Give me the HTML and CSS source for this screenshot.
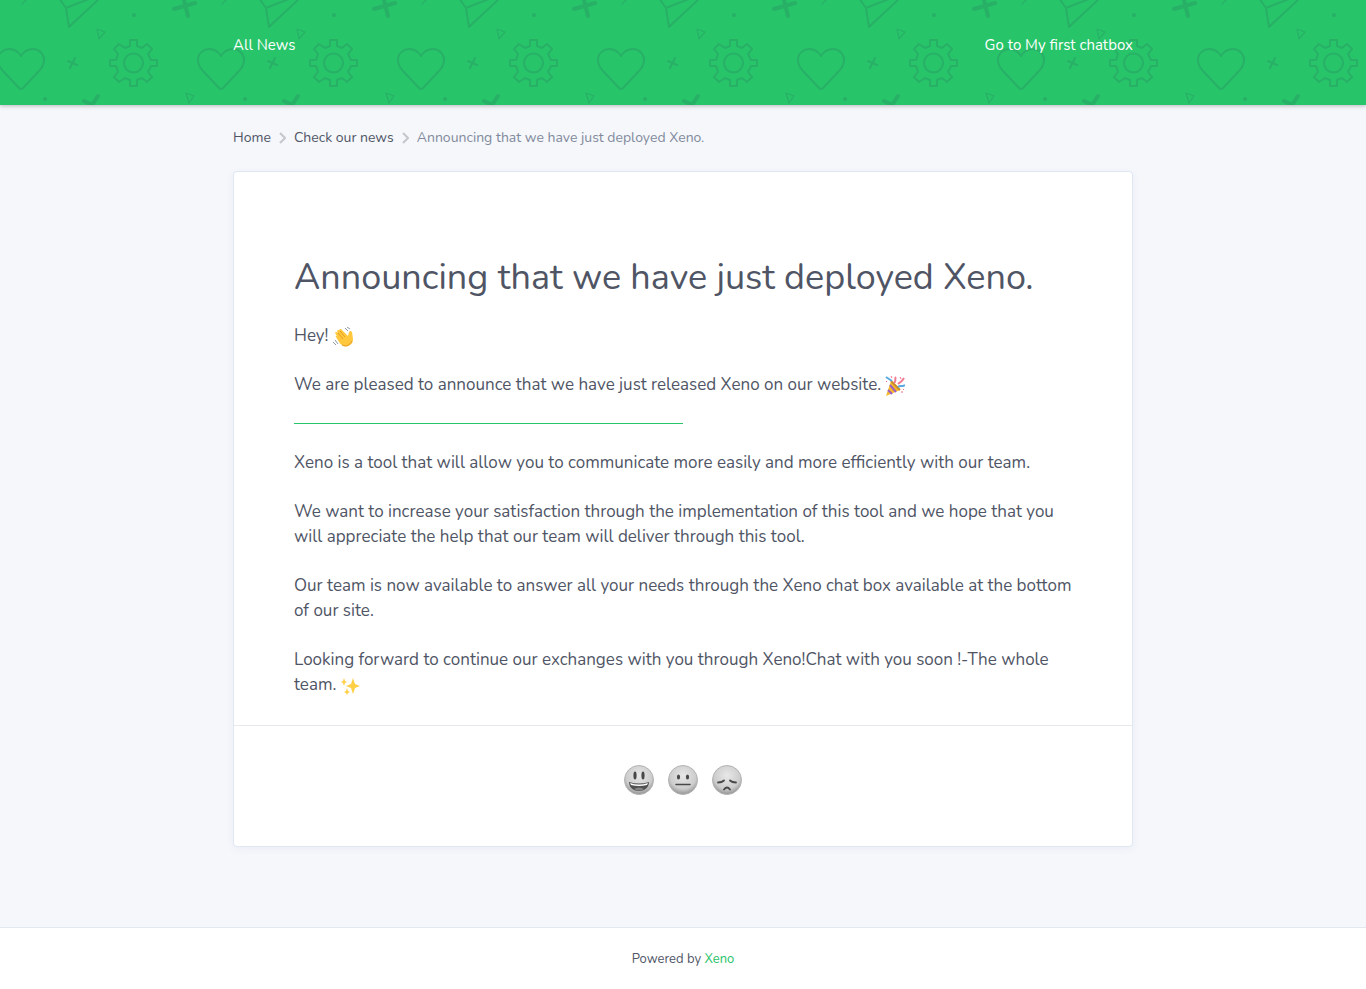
FILE: index.html
```html
<!DOCTYPE html>
<html lang="en">
<head>
    <meta charset="UTF-8">
    <meta name="viewport" content="width=device-width, initial-scale=1.0">
    <title>Announcing that we have just deployed Xeno.</title>
    <link rel="stylesheet" href="styles.css">
</head>
<body>
    <header class="header">
        <svg class="header-pattern" aria-hidden="true">
            <defs>
                <pattern id="doodles" x="-3" y="0" width="200" height="105" viewBox="-3 0 200 105" patternUnits="userSpaceOnUse">
                    <g fill="none" stroke="#27a866" stroke-width="2" stroke-linejoin="round" stroke-linecap="round">
                        <path d="M19 88L3 71C-1 67-2 64-2 60C-2 53 4 49 9 49C14 49 18 51 21 56C24 51 28 49 33 49C39 49 44 54 44 60C44 64 43 67 39 71L23 88Q21 90 19 88Z"/>
                        <path d="M130 40h7v6l5 2 5-4 5 5-4 5 3 6h6v6h-6l-3 6 4 5-5 5-5-4-5 2v6h-7v-6l-5-2-6 4-5-5 4-5-2-6h-6v-6h6l2-6-4-5 5-5 6 4 5-2z"/>
                        <circle cx="133.500" cy="63" r="9.500"/>
                        <path d="M59 -2L66 8L69 27L99 -1M66 8L89 -1"/>
                        <path d="M97 29l8 3-6 7zM186 93l8 3-5 7zM22 4l4-4" stroke-width="1.200"/>
                        <path d="M68 61l9 4M75 58l-5 10"/>
                        <path d="M174 9l21-6M183 -4l5 20M84 101l8 4 6-9" stroke-width="4"/>
                    </g>
                    <g fill="#27a866">
                        <circle cx="134" cy="15" r="2"/>
                        <circle cx="45" cy="99" r="2"/>
                    </g>
                </pattern>
            </defs>
            <rect width="100%" height="100%" fill="url(#doodles)"/>
        </svg>
        <nav class="wrapper nav">
            <a href="#">All News</a>
            <a href="#">Go to My first chatbox</a>
        </nav>
    </header>

    <main class="wrapper main">
        <nav class="breadcrumb" aria-label="Breadcrumb">
            <a href="#">Home</a>
            <svg class="chevron" viewBox="0 0 7 12" aria-hidden="true"><path d="M1 1l5 5-5 5"/></svg>
            <a href="#">Check our news</a>
            <svg class="chevron" viewBox="0 0 7 12" aria-hidden="true"><path d="M1 1l5 5-5 5"/></svg>
            <span>Announcing that we have just deployed Xeno.</span>
        </nav>

        <article class="card">
            <div class="content">
                <h1>Announcing that we have just deployed Xeno.</h1>
                <p>Hey!
                    <svg class="emoji" viewBox="0 0 20 20" role="img" aria-label="waving hand">
                        <path d="M2 6Q3 4 5 6L4 4Q5 2 7 4L6 3Q8 1 9 3L15 9L16 5Q17 3 19 5L20 12Q20 16 17 18Q13 21 9 18Q7 17 6 15L3 10Q2 8 4 9Z" fill="#ffc83d"/>
                        <path d="M5 6l5 6M7 4l5 6M9 18c4 2 8 0 10-4" fill="none" stroke="#e89b25"/>
                        <path d="M12 1l3 3M14 0l3 2M2 13l3 4M0 15l3 3" fill="none" stroke="#8d9aa5"/>
                    </svg>
                </p>
                <p>We are pleased to announce that we have just released Xeno on our website.
                    <svg class="emoji" viewBox="0 0 20 20" role="img" aria-label="party popper">
                        <path d="M6 5l9 9L1 20z" fill="#f7b928"/>
                        <path d="M5 9l6 7M3 14l4 4" fill="none" stroke="#9c5fc4" stroke-width="2"/>
                        <path d="M6 5l9 9" stroke="#c98a28" stroke-width="2"/>
                        <path d="M9 7c3-2 0-4 2-6M13 8c3-3 3-1 6-6" fill="none" stroke="#f27a90" stroke-width="2"/>
                        <path d="M1 1l6 4M13 11c2-2 4 0 7-2" fill="none" stroke="#5aa9e0" stroke-width="2"/>
                        <path d="M6 0l1 2M15 1l1 2M16 16h2M1 5l1 1M18 13l1 1" stroke="#ee6c8a"/>
                    </svg>
                </p>
                <hr>
                <p>Xeno is a tool that will allow you to communicate more easily and more efficiently with our team.</p>
                <p>We want to increase your satisfaction through the implementation of this tool and we hope that you will appreciate the help that our team will deliver through this tool.</p>
                <p>Our team is now available to answer all your needs through the Xeno chat box available at the bottom of our site.</p>
                <p>Looking forward to continue our exchanges with you through Xeno!Chat with you soon !-The whole team.
                    <svg class="emoji" viewBox="0 0 20 20" role="img" aria-label="sparkles">
                        <path d="M12 2l2 6 5 2-5 2-2 6-2-6-5-2 5-2zM3 2l1 3 2 1-2 1-1 3-1-3-2-1 2-1zM6 12l1 3 2 1-2 1-1 2-1-2-2-1 2-1z" fill="#ffcf45"/>
                    </svg>
                </p>
            </div>
            <div class="reactions">
                <svg class="defs" aria-hidden="true">
                    <defs>
                        <radialGradient id="face" cx="50%" cy="35%" r="65%">
                            <stop offset="0" stop-color="#e8e8e8"/>
                            <stop offset="0.7" stop-color="#cccccc"/>
                            <stop offset="1" stop-color="#929292"/>
                        </radialGradient>
                    </defs>
                </svg>
                <button type="button" aria-label="Happy">
                    <svg viewBox="0 0 30 30">
                        <circle cx="15" cy="15" r="14.500" fill="url(#face)" stroke="#b4b4b4"/>
                        <ellipse cx="11" cy="10.500" rx="1.600" ry="4" fill="#484848"/>
                        <ellipse cx="19" cy="10.500" rx="1.600" ry="4" fill="#484848"/>
                        <path d="M5 17q10 3 20 0c0 6-5 9-10 9S5 23 5 17z" fill="#505050"/>
                        <path d="M6 18q9 3 18 0l-1 2q-8 2-16 0z" fill="#fff"/>
                        <path d="M10 24q5-3 10 0-5 3-10 0z" fill="#858585"/>
                    </svg>
                </button>
                <button type="button" aria-label="Neutral">
                    <svg viewBox="0 0 30 30">
                        <circle cx="15" cy="15" r="14.500" fill="url(#face)" stroke="#b4b4b4"/>
                        <ellipse cx="10.500" cy="12" rx="1.600" ry="2.500" fill="#484848"/>
                        <ellipse cx="19.500" cy="12" rx="1.600" ry="2.500" fill="#484848"/>
                        <path d="M8 19.500h14" stroke="#484848" stroke-width="1.500" stroke-linecap="round"/>
                    </svg>
                </button>
                <button type="button" aria-label="Sad">
                    <svg viewBox="0 0 30 30">
                        <circle cx="15" cy="15" r="14.500" fill="url(#face)" stroke="#b4b4b4"/>
                        <path d="M6 17.500q4 0 6-2M18 15.500q2 2 6 2M12 24.500q3-4 6 0" fill="none" stroke="#484848" stroke-width="1.800" stroke-linecap="round"/>
                    </svg>
                </button>
            </div>
        </article>
    </main>

    <footer class="footer">
        Powered by <a href="#">Xeno</a>
    </footer>
</body>
</html>
```

FILE: styles.css
```css
* {
    box-sizing: border-box;
}
body {
    display: flex;
    flex-direction: column;
    min-height: 100vh;
    margin: 0;
    font-family: Nunito, Lato, sans-serif;
    color: #4f5565;
    background-color: #f5f7fb;
}
a {
    color: inherit;
    text-decoration: none;
}
.wrapper {
    width: 100%;
    max-width: 900px;
    margin: 0 auto;
}
.header {
    position: relative;
    padding: 33px 0 48px;
    background-color: #27c469;
    box-shadow: 0 1px 4px rgba(0,0,0,0.25);
}
.header-pattern {
    position: absolute;
    top: 0;
    left: 0;
    width: 100%;
    height: 100%;
    opacity: 0.7;
}
.nav {
    position: relative;
    display: flex;
    justify-content: space-between;
    font-size: 15px;
    line-height: 24px;
    color: #fff;
}
.main {
    flex: 1;
    padding-bottom: 80px;
}
.breadcrumb {
    display: flex;
    align-items: center;
    gap: 8px;
    padding: 23px 0;
    font-size: 14px;
    line-height: 20px;
}
.breadcrumb span {
    color: #818a9c;
}
.chevron {
    width: 7px;
    height: 12px;
    fill: none;
    stroke: #c5c7cc;
    stroke-width: 2;
}
.card {
    border: 1px solid #dfe7f3;
    border-radius: 4px;
    background-color: #fff;
    box-shadow: 0 2px 8px rgba(60,80,130,0.06);
}
.content {
    padding: 81px 60px 28px;
}
h1 {
    margin: 0 0 20px;
    font-size: 36px;
    line-height: 50px;
    font-weight: 400;
}
p {
    margin: 0 0 24px;
    font-size: 17px;
    line-height: 25px;
}
p:last-child {
    margin-bottom: 0;
}
hr {
    width: 50%;
    margin: 26px 0;
    border: 0;
    border-top: 1px solid #27c469;
}
.emoji {
    width: 20px;
    height: 20px;
    margin: -2px 0;
    vertical-align: -4px;
}
.reactions {
    display: flex;
    justify-content: center;
    gap: 14px;
    padding: 39px 0 51px;
    border-top: 1px solid #e6e9ee;
}
.defs {
    position: absolute;
    width: 0;
    height: 0;
}
.reactions button {
    width: 30px;
    height: 30px;
    padding: 0;
    border: 0;
    background: none;
    cursor: pointer;
}
.reactions button svg {
    display: block;
    width: 100%;
    height: 100%;
}
.footer {
    padding: 21px 0 19px;
    border-top: 1px solid #e3e8ee;
    font-size: 13px;
    line-height: 21px;
    text-align: center;
    background-color: #fff;
}
.footer a {
    color: #27c469;
}
```
